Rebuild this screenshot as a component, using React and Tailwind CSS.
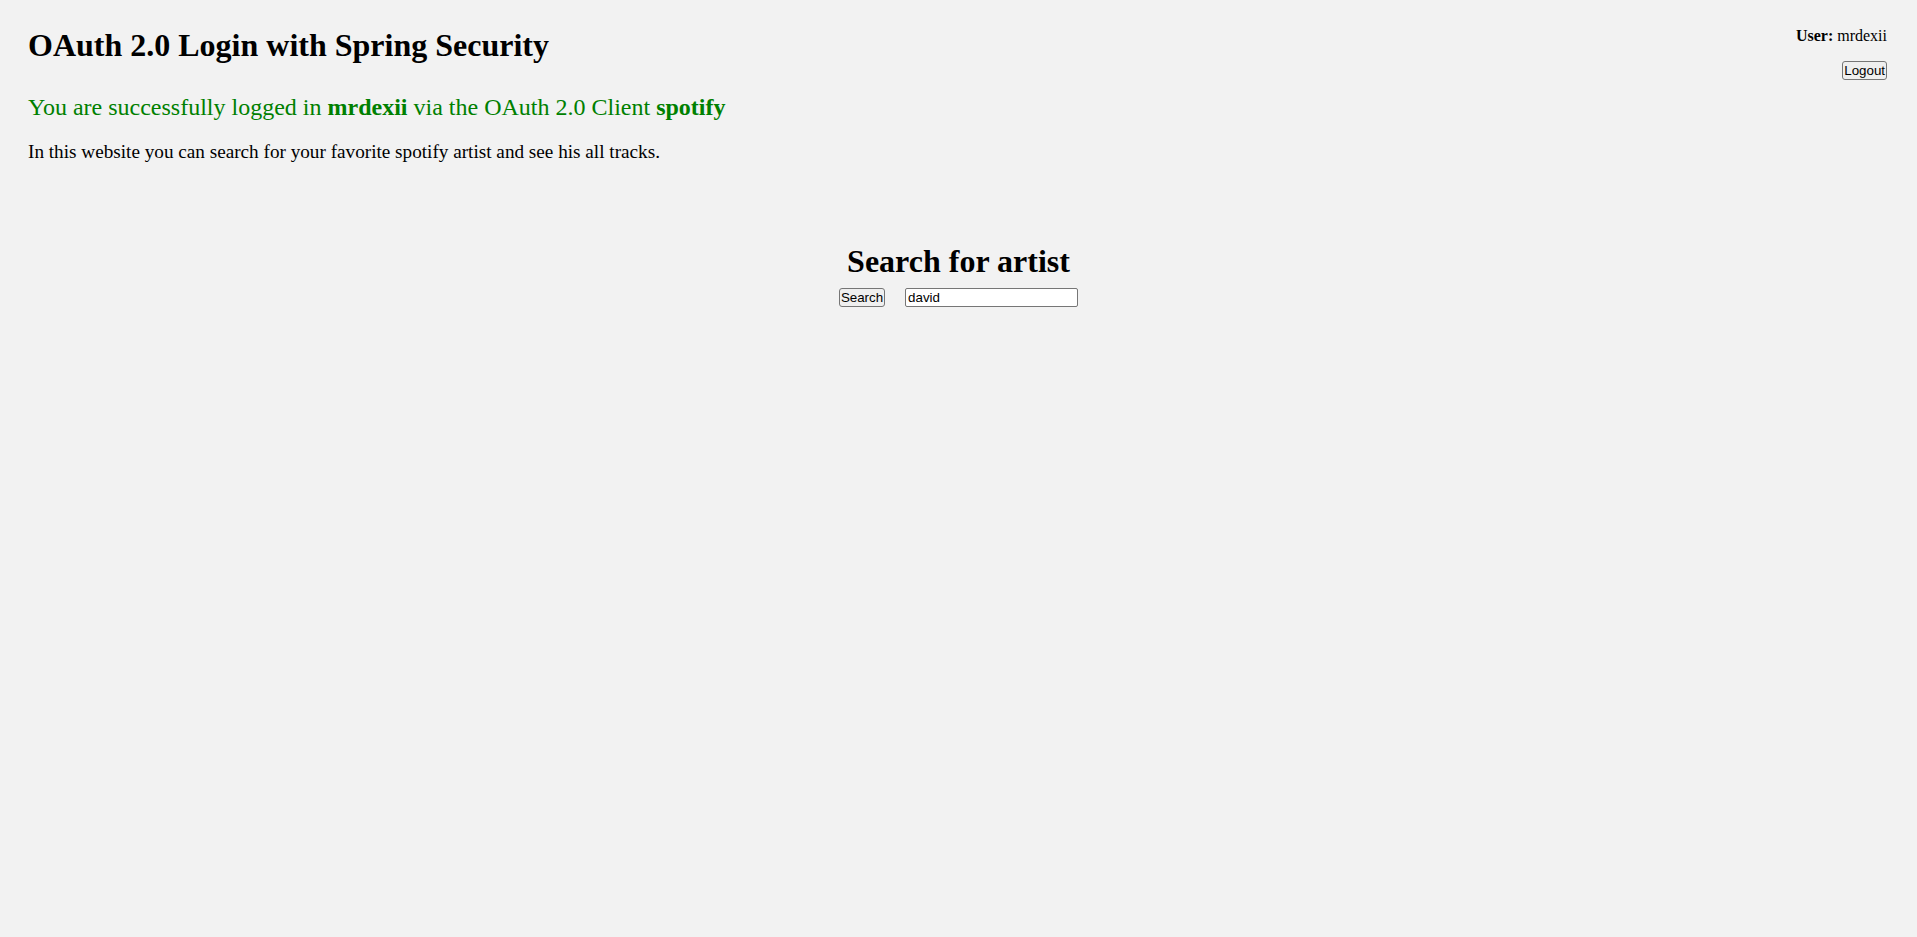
import React, { useState } from 'react';

const App = () => {
  const [query, setQuery] = useState('david');

  return (
    <div className="min-h-screen bg-[#f2f2f2] px-[28px] pt-[27px] text-black font-['Liberation_Serif',serif]">
      <div className="flex justify-between items-start">
        <div>
          <h1 className="text-[32px] font-bold leading-[37px]">OAuth 2.0 Login with Spring Security</h1>
          <p className="mt-[29px] text-[24px] leading-[28px] text-[#008000]">
            You are successfully logged in <b>mrdexii</b> via the OAuth 2.0 Client <b>spotify</b>
          </p>
          <p className="mt-[20px] text-[19.2px] leading-[22px]">
            In this website you can search for your favorite spotify artist and see his all tracks.
          </p>
        </div>
        <div className="flex flex-col items-end pr-[2px]">
          <div className="text-[16px] leading-[18px]">
            <b>User:</b> mrdexii
          </div>
          <button className="mt-[16px] px-[1px] py-[1px] border border-[#767676] rounded-[3px] bg-[#efefef] text-[13.33px] leading-[15px] font-['Liberation_Sans',sans-serif]">
            Logout
          </button>
        </div>
      </div>

      <div className="mt-[80px] flex flex-col items-center">
        <h2 className="text-[32px] font-bold leading-[37px]">Search for artist</h2>
        <div className="mt-[8px] flex items-center gap-[20px]">
          <button className="px-[1px] py-[1px] border border-[#767676] rounded-[3px] bg-[#efefef] text-[13.33px] leading-[15px] font-['Liberation_Sans',sans-serif]">
            Search
          </button>
          <input
            type="text"
            value={query}
            onChange={(e) => setQuery(e.target.value)}
            className="w-[173px] h-[19px] px-[2px] border border-[#767676] rounded-[2px] bg-white text-[13.33px] font-['Liberation_Sans',sans-serif] outline-none"
          />
        </div>
      </div>
    </div>
  );
};

export default App;
